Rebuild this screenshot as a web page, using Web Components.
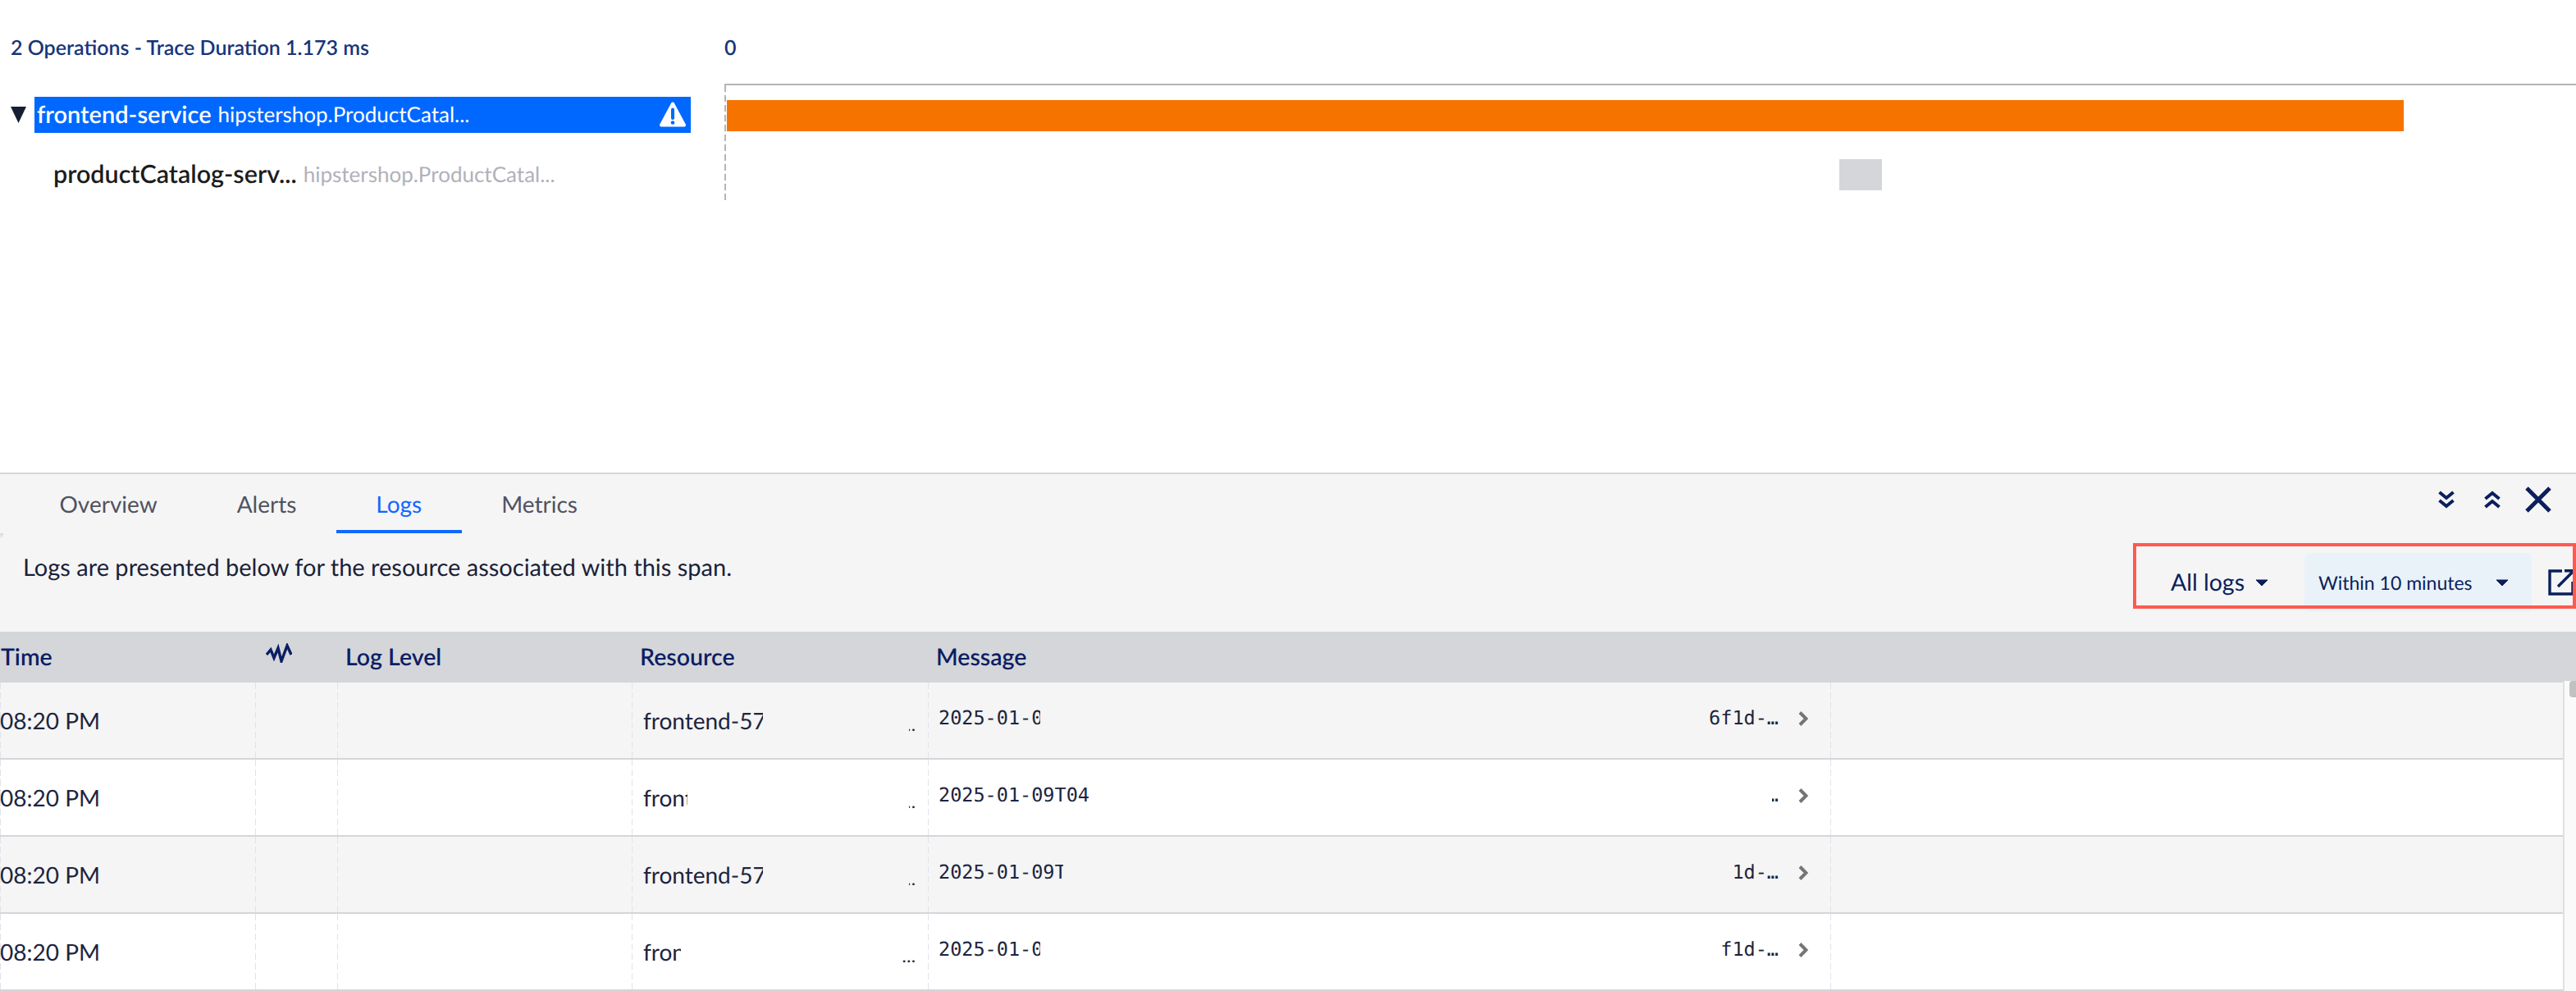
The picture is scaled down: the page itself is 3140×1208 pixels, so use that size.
<!doctype html>
<html>
<head>
<meta charset="utf-8">
<title>Trace logs</title>
<style>
  html, body { margin: 0; height: 1208px; overflow: hidden; background: #fff; }
  body { font-family: Lato, "Open Sans", sans-serif; }
</style>
</head>
<body>
<trace-page></trace-page>

<script>
const DASH = (color) => `repeating-linear-gradient(180deg, ${color} 0, ${color} 8px, transparent 8px, transparent 12px)`;

class TraceRow extends HTMLElement {
  constructor() {
    super();
    this.attachShadow({ mode: "open" });
    this.shadowRoot.innerHTML = `
      <style>
        :host { display: flex; align-items: center; height: 44px; white-space: nowrap; }
        .toggle { width: 42px; display: flex; padding-left: 13px; box-sizing: border-box; }
        .label { width: 800px; height: 44px; display: flex; align-items: center; box-sizing: border-box; padding: 0 6px 2px 3px; gap: 8px; }
        .end { margin: 2px 0 0 auto; display: flex; }
        :host([selected]) .label { background: #0068ff; color: #fff; }
        :host(:not([selected])) .label { padding-left: 23px; color: #1b1c20; }
        .name { font-weight: 600; font-size: 29px; }
        :host(:not([selected])) .name { font-size: 30.5px; }
        .op { font-size: 26px; }
        :host(:not([selected])) .op { color: #b1b1ba; }
      </style>
      <div class="toggle"><slot name="toggle"></slot></div>
      <div class="label">
        <span class="name">${this.getAttribute("name")}</span>
        <span class="op">${this.getAttribute("op")}</span>
        <span class="end"><slot name="end"></slot></span>
      </div>
    `;
  }
}
customElements.define("trace-row", TraceRow);

class TraceView extends HTMLElement {
  constructor() {
    super();
    this.attachShadow({ mode: "open" });
    this.shadowRoot.innerHTML = `
      <style>
        :host { display: grid; grid-template-columns: 883px 1fr; height: 576px; color: #17357a; }
        .head { height: 118px; box-sizing: border-box; padding: 44px 0 0 13px; font-size: 25px; font-weight: 600; line-height: 28px; }
        trace-row + trace-row { margin-top: 29px; }
        .zero { height: 102px; box-sizing: border-box; padding-top: 44px; font-size: 25px; font-weight: 600; line-height: 28px; }
        .tracks {
          border-top: 2px solid #b5b5b5;
          height: 144px;
          padding: 18px 0 0 3px;
          box-sizing: border-box;
          background: ${DASH("#b5b5b5")} left top / 2px 100% no-repeat;
        }
        .bar { height: 38px; }
        .bar.main { width: 2044px; background: #f77300; }
        .bar.child { width: 52px; margin: 34px 0 0 1356px; background: #d5d6da; }
      </style>
      <div>
        <div class="head">2 Operations - Trace Duration 1.173 ms</div>
        <trace-row selected name="frontend-service" op="hipstershop.ProductCatal...">
          <svg slot="toggle" width="19" height="20" viewBox="0 0 19 20"><path d="M0 0H19L9.5 20Z" fill="#171f35"/></svg>
          <svg slot="end" width="32" height="32" viewBox="0 0 32 32"><path d="M16 2.5 30 28.5H2Z" fill="#fff" stroke="#fff" stroke-width="4" stroke-linejoin="round"/><path d="M16 9.5V20" stroke="#0068ff" stroke-width="4" stroke-linecap="round"/><circle cx="16" cy="25.5" r="2.3" fill="#0068ff"/></svg>
        </trace-row>
        <trace-row name="productCatalog-serv..." op="hipstershop.ProductCatal..."></trace-row>
      </div>
      <div>
        <div class="zero">0</div>
        <div class="tracks">
          <div class="bar main"></div>
          <div class="bar child"></div>
        </div>
      </div>
    `;
  }
}
customElements.define("trace-view", TraceView);

class TabBar extends HTMLElement {
  constructor() {
    super();
    this.attachShadow({ mode: "open" });
    const active = this.getAttribute("active");
    const tabs = this.getAttribute("tabs").split(",").map((name) =>
      `<div class="tab${name === active ? " on" : ""}">${name}</div>`).join("");
    this.shadowRoot.innerHTML = `
      <style>
        :host { display: flex; padding-left: 24px; font-size: 28px; color: #50535f; }
        .tab { padding: 6px 48.5px 0; height: 62px; line-height: 60px; border-bottom: 4px solid transparent; }
        .on { color: #1167ff; border-bottom-color: #1167ff; }
      </style>
      ${tabs}
    `;
  }
}
customElements.define("tab-bar", TabBar);

class LogFilters extends HTMLElement {
  constructor() {
    super();
    this.attachShadow({ mode: "open" });
    const caret = `<svg width="16" height="9" viewBox="0 0 16 9"><path d="M1 1H15L8 8Z" fill="#0a1f5c" stroke="#0a1f5c" stroke-linejoin="round"/></svg>`;
    this.shadowRoot.innerHTML = `
      <style>
        :host { display: flex; align-items: flex-start; padding-top: 24px; color: #0a1f5c; }
        .all { display: flex; align-items: center; gap: 13px; height: 72px; font-size: 28.5px; padding-right: 44px; }
        .range { display: flex; align-items: center; width: 277px; height: 72px; box-sizing: border-box; padding: 0 28px 0 17px; border-radius: 8px; background: #eaf2f9; font-size: 23px; }
        .range svg { margin-left: auto; }
        .out { margin: 20px 0 0 20px; width: 34px; height: 32px; }
      </style>
      <div class="all">All logs ${caret}</div>
      <div class="range">Within 10 minutes ${caret}</div>
      <svg class="out" viewBox="0 0 34 32" fill="none" stroke="#0a1f5c" stroke-width="3.4">
        <path d="M17 2H2V30H30V15"/><path d="M12 21 31 2M20 1.8H32.5V14"/>
      </svg>
    `;
  }
}
customElements.define("log-filters", LogFilters);

class LogRow extends HTMLElement {
  constructor() {
    super();
    this.attachShadow({ mode: "open" });
    const tail = (value, width) => width
      ? `<span class="tail cut" style="width:${width}px">${value}</span>`
      : `<span class="tail">${value}</span>`;
    this.shadowRoot.innerHTML = `
      <style>
        :host { display: grid; grid-template-columns: 311px 100px 359px 361px 1100px 1fr; height: 94px; box-sizing: border-box; border-bottom: 2px solid #d5d6da; background: #fff; color: #1c2540; font-size: 28px; }
        :host([alt]) { background: #f5f5f5; }
        .cell { display: flex; align-items: center; min-width: 0; background: ${DASH("#e2e3ea")} -1px 0 / 2px 100% no-repeat; }
        .cell:first-child { background: none; padding-left: 7px; }
        .res { padding-left: 14px; }
        .clip { overflow: hidden; white-space: nowrap; flex: none; }
        .tail { margin-left: auto; white-space: nowrap; }
        .cut { display: flex; justify-content: flex-end; overflow: hidden; flex: none; }
        .res .tail { margin-right: 15px; font-size: 22px; padding-top: 8px; }
        .msg { padding-left: 13px; padding-bottom: 6px; font: 23.5px "DejaVu Sans Mono", "Liberation Mono", monospace; }
        .msg .tail { margin-right: 24px; }
        .go { width: 12px; height: 18px; margin-right: 27px; margin-top: 2px; }
      </style>
      <div class="cell">08:20 PM</div>
      <div class="cell"></div>
      <div class="cell"></div>
      <div class="cell res">
        <span class="clip" style="width:${this.getAttribute("res-clip")}px">frontend-57f8</span>
        ${tail("…", this.getAttribute("res-cut"))}
      </div>
      <div class="cell msg">
        <span class="clip" style="width:${this.getAttribute("msg-clip")}px">2025-01-09T04:20</span>
        ${tail(this.getAttribute("msg-tail"), this.getAttribute("msg-cut"))}
        <svg class="go" viewBox="0 0 12 18" fill="none" stroke="#757575" stroke-width="4"><path d="M2 1.500 9.500 9 2 16.500"/></svg>
      </div>
      <div class="cell"></div>
    `;
  }
}
customElements.define("log-row", LogRow);

class LogTable extends HTMLElement {
  constructor() {
    super();
    this.attachShadow({ mode: "open" });
    this.shadowRoot.innerHTML = `
      <style>
        :host { display: block; }
        .head { display: grid; grid-template-columns: 311px 100px 359px 361px 1fr; height: 62px; align-items: center; background: #d5d6da; color: #0b1f63; font-size: 28.5px; font-weight: 600; }
        .head > div:nth-child(1) { padding-left: 1px; }
        .head > div:nth-child(n+3) { padding-left: 10px; }
        .wave { display: block; margin: -10px 0 0 13px; }
        .body { display: flex; }
        .rows { flex: 1; }
        .scroll { width: 14px; margin-top: -2px; border-left: 2px solid #e0e0e0; background: #fafafa; display: flex; justify-content: flex-end; }
        .thumb { width: 8px; height: 20px; border-radius: 4px 0 0 4px; background: #c1c1c1; }
      </style>
      <div class="head">
        <div>Time</div>
        <div><svg class="wave" width="32" height="24" viewBox="0 0 32 24" fill="none" stroke="#0b1f63" stroke-width="3.4"><path d="M1 14 6 8 10 18 15 6 19 22 26 3 31 14"/></svg></div>
        <div>Log Level</div>
        <div>Resource</div>
        <div>Message</div>
      </div>
      <div class="body">
        <div class="rows"><slot></slot></div>
        <div class="scroll"><div class="thumb"></div></div>
      </div>
    `;
  }
}
customElements.define("log-table", LogTable);

class DetailPanel extends HTMLElement {
  constructor() {
    super();
    this.attachShadow({ mode: "open" });
    this.shadowRoot.innerHTML = `
      <style>
        :host { display: block; position: relative; background: #f5f5f5; border-top: 2px solid #d5d6da; color: #0a1f5c; }
        .top { display: flex; justify-content: space-between; height: 72px; }
        .tools { display: flex; align-items: center; padding: 0 30px 10px 0; }
        .tools svg { display: block; }
        .info { display: flex; justify-content: space-between; height: 120px; }
        .desc { padding: 27px 0 0 28px; font-size: 29px; line-height: 30px; color: #1a2238; }
        .mark { position: absolute; left: 2600px; top: 84px; width: 540px; height: 80px; box-sizing: border-box; border: 4px solid #ff5a4f; }
        .nub { position: absolute; left: 0; top: 72px; width: 4px; height: 7px; background: linear-gradient(#d8dae4, #f5f5f5); }
      </style>
      <div class="top">
        <slot name="tabs"></slot>
        <div class="tools">
          <svg width="20" height="22" viewBox="0 0 20 22" fill="none" stroke="#0a1f5c" stroke-width="4"><path d="M1.500 2 10 9 18.500 2M1.500 12 10 19 18.500 12"/></svg>
          <svg style="margin-left:36px" width="20" height="22" viewBox="0 0 20 22" fill="none" stroke="#0a1f5c" stroke-width="4"><path d="M1.500 20 10 13 18.500 20M1.500 10 10 3 18.500 10"/></svg>
          <svg style="margin-left:30px" width="32" height="32" viewBox="0 0 32 32" fill="none" stroke="#0a1f5c" stroke-width="5"><path d="M2 2 30 30M30 2 2 30"/></svg>
        </div>
      </div>
      <div class="info">
        <div class="desc">Logs are presented below for the resource associated with this span.</div>
        <log-filters></log-filters>
      </div>
      <slot></slot>
      <div class="nub"></div>
      <div class="mark"></div>
    `;
  }
}
customElements.define("detail-panel", DetailPanel);

class TracePage extends HTMLElement {
  constructor() {
    super();
    this.attachShadow({ mode: "open" });
    this.shadowRoot.innerHTML = `
      <style>
        :host { display: block; width: 3140px; height: 1208px; overflow: hidden; font-family: Lato, "Open Sans", sans-serif; text-rendering: geometricPrecision; }
      </style>
      <trace-view></trace-view>
      <detail-panel>
        <tab-bar slot="tabs" tabs="Overview,Alerts,Logs,Metrics" active="Logs"></tab-bar>
        <log-table>
          <log-row alt res-clip="146" res-cut="8" msg-clip="124" msg-tail="6f1d-…"></log-row>
          <log-row res-clip="54" res-cut="8" msg-clip="185" msg-tail="…" msg-cut="8"></log-row>
          <log-row alt res-clip="146" res-cut="8" msg-clip="152" msg-tail="1d-…"></log-row>
          <log-row res-clip="46" msg-clip="124" msg-tail="f1d-…"></log-row>
        </log-table>
      </detail-panel>
    `;
  }
}
customElements.define("trace-page", TracePage);
</script>
</body>
</html>
